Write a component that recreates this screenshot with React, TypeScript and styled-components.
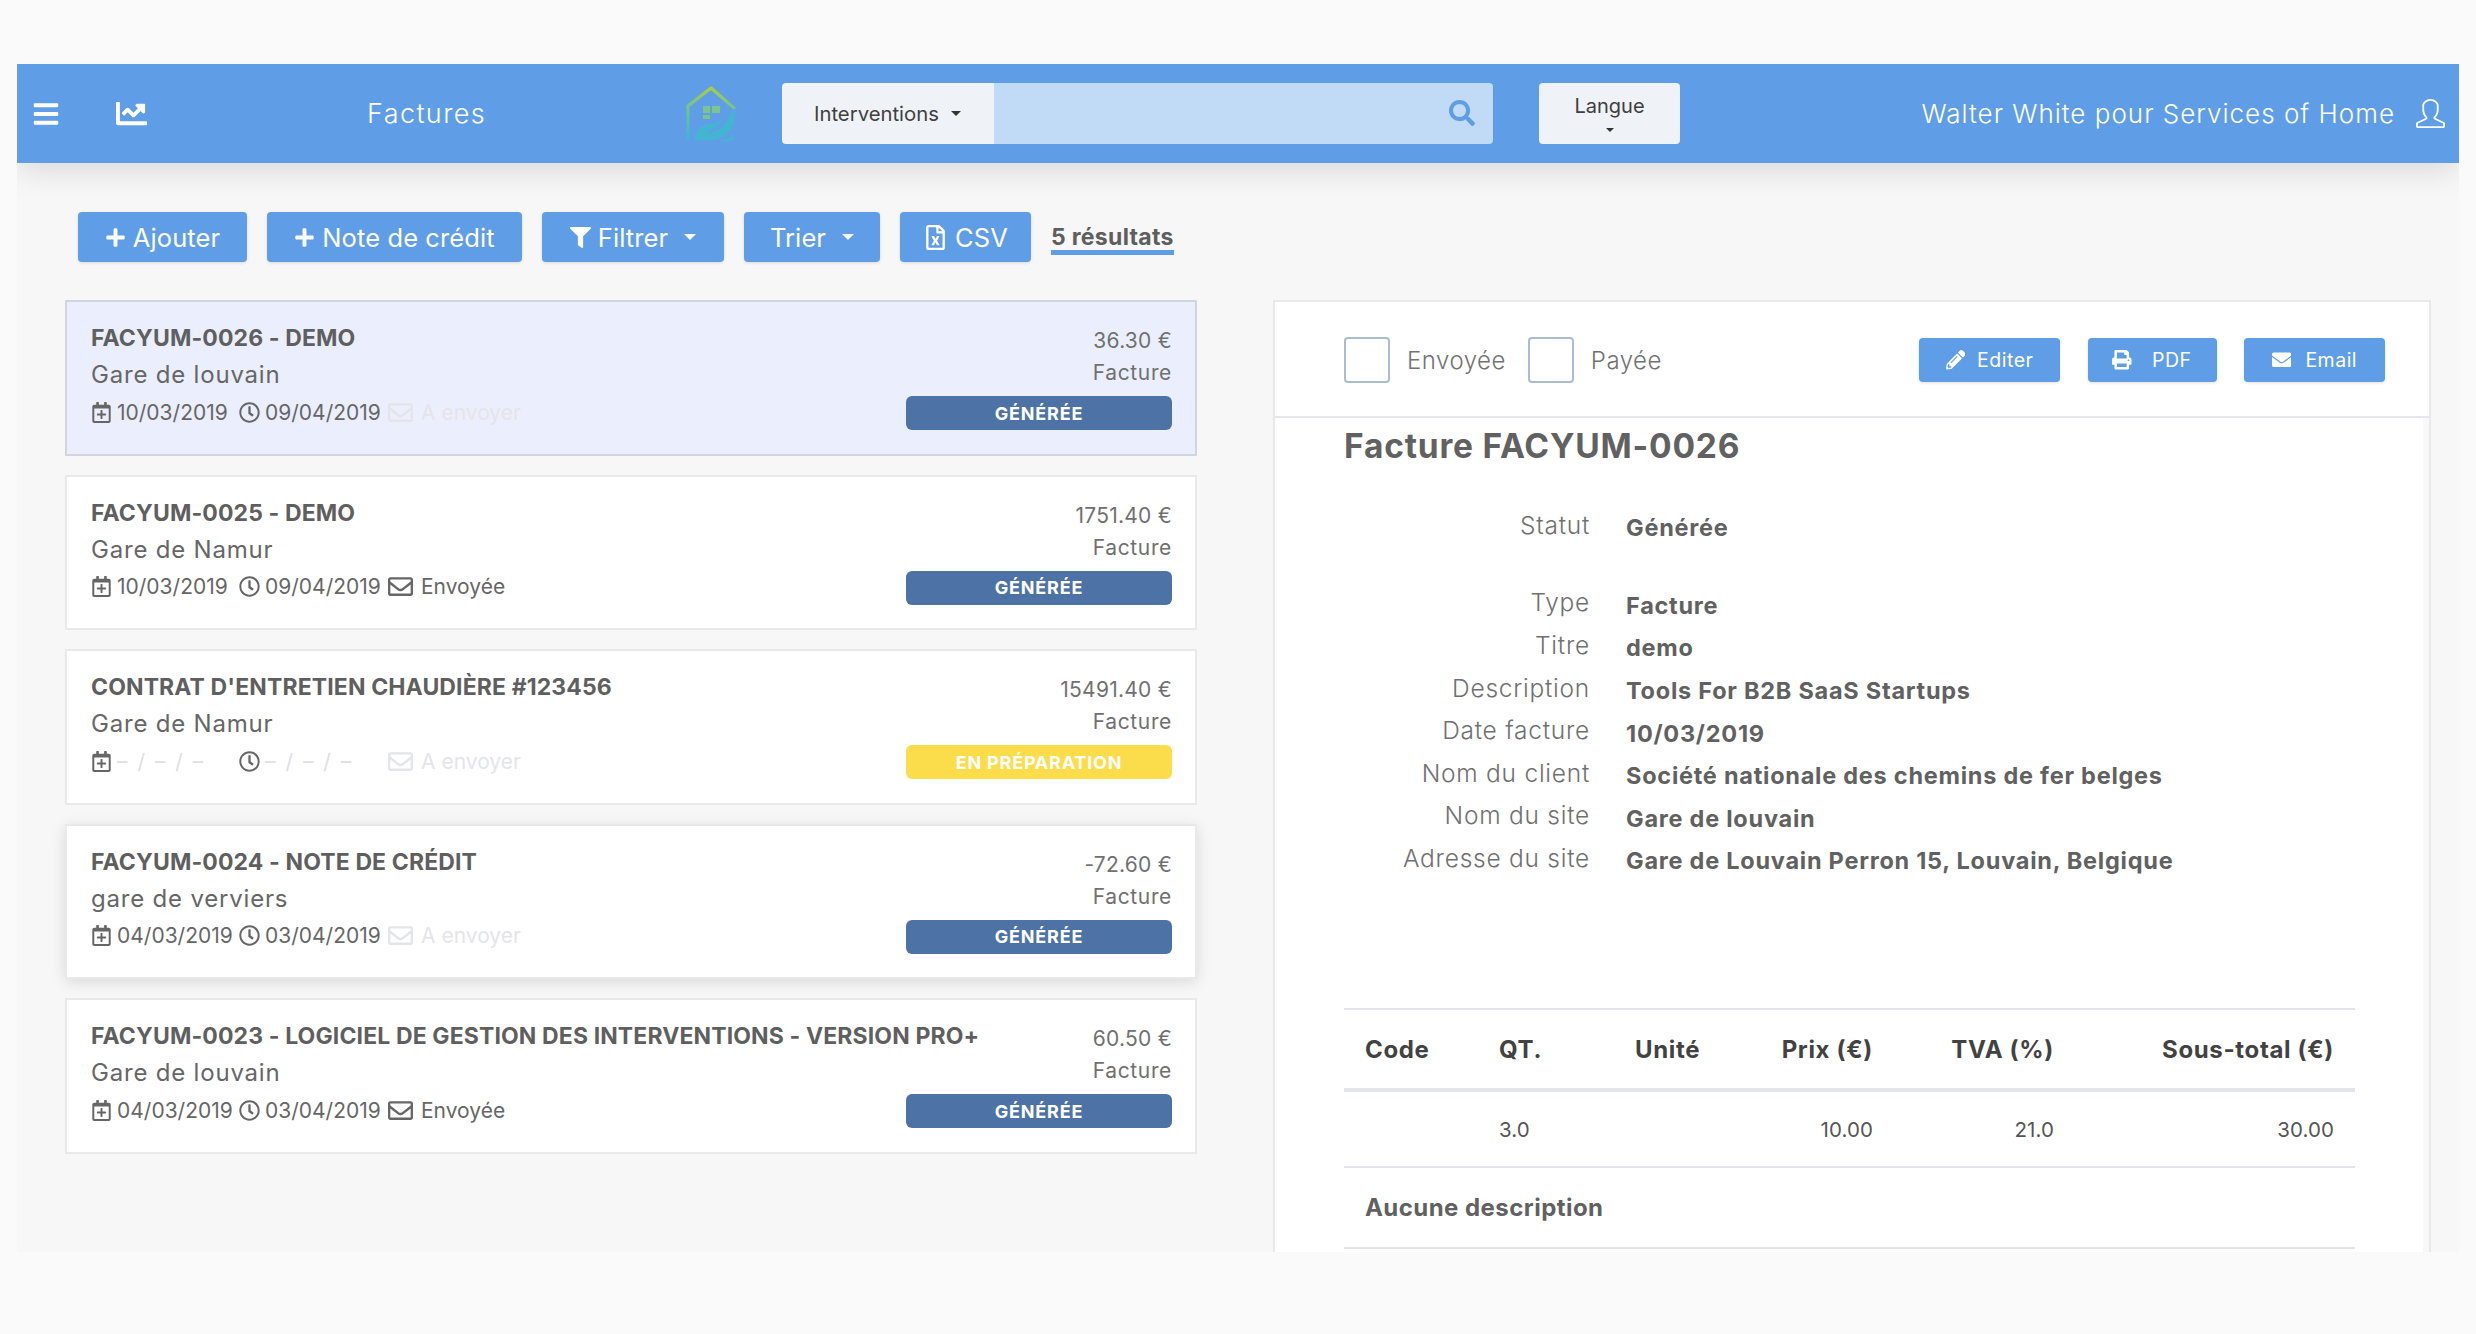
import React from 'react';
import styled, { createGlobalStyle } from 'styled-components';
import {
  FaBars, FaChartLine, FaSearch, FaPlus, FaFilter, FaRegFileExcel, FaRegCalendarPlus,
  FaRegClock, FaRegEnvelope, FaPencilAlt, FaPrint, FaEnvelope,
} from 'react-icons/fa';
import { SlUser } from 'react-icons/sl';

const Global = createGlobalStyle`
  html, body { margin: 0; padding: 0; background: #fafafa; }
  * { box-sizing: border-box; }
  body { font-family: Inter, "Open Sans", "Liberation Sans", sans-serif; color: #636363; }
`;

const Page = styled.div`
  width: 2476px;
  height: 1334px;
  padding: 64px 17px 82px;
`;
const AppFrame = styled.div`
  width: 2442px;
  height: 1188px;
  background: #f7f7f7;
  overflow: hidden;
  position: relative;
`;
const Header = styled.header`
  height: 99px;
  padding-left: 15px;
  background: #5f9ee6;
  display: flex;
  align-items: center;
  color: #fff;
  box-shadow: 0 6px 30px rgba(0, 0, 0, 0.13);
  position: relative;
`;
const HeaderIcon = styled.span<{ $w: number; $mr: number }>`
  display: flex;
  width: ${(p) => p.$w}px;
  margin-right: ${(p) => p.$mr}px;
  font-size: ${(p) => p.$w}px;
`;
const HeaderTitle = styled.div`
  font-size: 27px;
  width: 319px;
  letter-spacing: 1.4px;
  font-weight: 300;
`;
const Logo = styled.svg`
  width: 52px;
  height: 56px;
  margin-right: 44px;
  flex: none;
`;
const SearchBox = styled.div`
  width: 711px;
  height: 61px;
  display: flex;
  border-radius: 4px;
  overflow: hidden;
  margin-top: -1px;
`;
const SearchSelect = styled.div`
  width: 212px;
  background: #eff2f7;
  color: #3f3f3f;
  font-size: 20.3px;
  display: flex;
  align-items: center;
  padding-left: 32px;
  gap: 12px;
`;
const Caret = styled.span<{ $c?: string; $s?: number }>`
  display: inline-block;
  width: 0;
  height: 0;
  border-left: ${(p) => p.$s ?? 5}px solid transparent;
  border-right: ${(p) => p.$s ?? 5}px solid transparent;
  border-top: ${(p) => p.$s ?? 5}px solid ${(p) => p.$c ?? '#333'};
`;
const SearchField = styled.div`
  flex: 1;
  background: #c1daf6;
  display: flex;
  align-items: center;
  justify-content: flex-end;
  padding-right: 18px;
  color: #5f9ee6;
  font-size: 26px;
`;
const LangButton = styled.div`
  width: 141px;
  height: 61px;
  margin-left: 46px;
  background: #eff2f7;
  border-radius: 4px;
  color: #3f3f3f;
  font-size: 20px;
  display: flex;
  flex-direction: column;
  align-items: center;
  padding-top: 11px;
  gap: 10px;
`;
const UserArea = styled.div`
  margin-left: auto;
  padding-right: 14px;
  display: flex;
  align-items: center;
  gap: 21px;
  font-size: 26px;
  font-weight: 300;
  letter-spacing: 1px;
`;
const UserIcon = styled.span`
  display: flex;
  font-size: 29px;
`;
const Toolbar = styled.div`
  display: flex;
  align-items: center;
  padding: 49px 0 0 61px;
  height: 99px;
`;
const Btn = styled.div<{ $w: number; $mr?: number }>`
  width: ${(p) => p.$w}px;
  height: 50px;
  margin-right: ${(p) => p.$mr ?? 20}px;
  background: #5f9ee6;
  border-radius: 4px;
  color: #fff;
  font-size: 25.5px;
  letter-spacing: 0.1px;
  display: flex;
  align-items: center;
  justify-content: center;
  gap: 7px;
  box-shadow: 0 1px 3px rgba(0, 0, 0, 0.12);
  svg { font-size: 21px; }
`;
const CsvIcon = styled.span`
  display: flex;
  svg { font-size: 25px; }
`;
const ToolCaret = styled.span`
  margin-left: 9px;
  display: flex;
`;
const Results = styled.div`
  font-size: 23px;
  line-height: 26px;
  letter-spacing: 0.3px;
  font-weight: 700;
  color: #5e5e5e;
  border-bottom: 5px solid #5f9ee6;
  margin-top: 5px;
`;
const Main = styled.div`
  display: flex;
  align-items: flex-start;
  padding: 38px 0 0 48px;
`;
const List = styled.div`
  width: 1132px;
  display: flex;
  flex-direction: column;
  gap: 19px;
  flex: none;
`;
const Card = styled.div<{ $selected?: boolean; $raised?: boolean }>`
  height: 155.5px;
  background: ${(p) => (p.$selected ? '#ebeffd' : '#fff')};
  border: 2px solid ${(p) => (p.$selected ? '#d2d5df' : '#e9e9e9')};
  padding: 19px 23px 0 24px;
  display: flex;
  justify-content: space-between;
  box-shadow: ${(p) => (p.$raised ? '0 3px 14px rgba(0,0,0,0.12)' : 'none')};
`;
const CardLeft = styled.div`
  display: flex;
  flex-direction: column;
  min-width: 0;
`;
const CardTitle = styled.div`
  font-size: 23px;
  line-height: 32px;
  font-weight: 700;
  color: #5f5f5f;
  letter-spacing: 0.12px;
  white-space: nowrap;
  padding-top: 1px;
`;
const CardSite = styled.div`
  font-size: 24px;
  line-height: 34px;
  margin-top: 4px;
  color: #666;
  letter-spacing: 0.8px;
`;
const Meta = styled.div`
  display: flex;
  align-items: center;
  margin-top: 3px;
  height: 34px;
  font-size: 21px;
`;
const MetaItem = styled.div<{ $w: number; $faded?: boolean }>`
  width: ${(p) => p.$w}px;
  display: flex;
  align-items: center;
  gap: 5px;
  flex: none;
  color: ${(p) => (p.$faded ? '#e4e5e8' : '#666')};
  white-space: nowrap;
  svg { font-size: 21px; flex: none; }
`;
const MetaMail = styled(MetaItem)`
  gap: 8px;
  svg { font-size: 25px; }
`;
const FadedDate = styled.span`
  color: #e0e0e0;
  letter-spacing: 2px;
`;
const CardRight = styled.div`
  width: 266px;
  flex: none;
  display: flex;
  flex-direction: column;
  align-items: flex-end;
  color: #707070;
  font-size: 21px;
`;
const Amount = styled.div`
  line-height: 32px;
  margin-top: 4px;
  letter-spacing: 0.25px;
`;
const Kind = styled.div`
  line-height: 32px;
  letter-spacing: 0.65px;
`;
const Badge = styled.div<{ $yellow?: boolean }>`
  width: 266px;
  height: 34px;
  margin-top: 7px;
  border-radius: 6px;
  background: ${(p) => (p.$yellow ? '#fbdc4a' : '#4d72a6')};
  color: #fff;
  font-size: 18px;
  font-weight: 700;
  letter-spacing: 0.8px;
  display: flex;
  align-items: center;
  justify-content: center;
`;
const Panel = styled.section`
  width: 1158px;
  margin-left: 76px;
  height: 970px;
  background: #fff;
  border: 2px solid #e9e9e9;
  flex: none;
`;
const PanelTop = styled.div`
  height: 116px;
  border-bottom: 2px solid #e6e7eb;
  display: flex;
  align-items: center;
  padding: 2px 44px 0 69px;
`;
const Check = styled.div`
  width: 46px;
  height: 46px;
  border: 2px solid #a9bcd4;
  border-radius: 4px;
  margin-right: 17px;
  flex: none;
`;
const CheckLabel = styled.div<{ $mr: number }>`
  font-size: 24px;
  font-weight: 300;
  margin-right: ${(p) => p.$mr}px;
  color: #727272;
  letter-spacing: 0.5px;
`;
const Actions = styled.div`
  margin-left: auto;
  display: flex;
  gap: 27.5px;
`;
const ActionBtn = styled.div<{ $w: number; $gap: number }>`
  width: ${(p) => p.$w}px;
  height: 44px;
  background: #5f9ee6;
  border-radius: 4px;
  color: #fff;
  font-size: 19.5px;
  display: flex;
  align-items: center;
  justify-content: center;
  gap: ${(p) => p.$gap}px;
  box-shadow: 0 1px 3px rgba(0, 0, 0, 0.12);
  letter-spacing: 0.5px;
`;
const PanelBody = styled.div`
  padding: 5.5px 46px 0 69px;
  border-right: 6px solid #f8f8f8;
  height: 850px;
`;
const DocTitle = styled.h1`
  margin: 0;
  font-size: 33.5px;
  line-height: 44px;
  font-weight: 700;
  color: #616161;
  letter-spacing: 0.8px;
`;
const Fields = styled.div`
  display: grid;
  grid-template-columns: 246px 1fr;
  column-gap: 36px;
  margin-top: 39px;
  align-items: center;
  grid-auto-rows: 42.6px;
`;
const FieldLabel = styled.div`
  text-align: right;
  font-size: 24.5px;
  font-weight: 300;
  color: #707070;
  letter-spacing: 0.75px;
  margin-top: -6px;
`;
const FieldValue = styled.div`
  font-size: 23.5px;
  font-weight: 700;
  color: #616161;
  letter-spacing: 0.75px;
`;
const FieldsRest = styled(Fields)`
  margin-top: 35px;
`;
const Table = styled.div`
  margin-top: 126px;
  width: 1011px;
  border-top: 2px solid #e3e4e9;
`;
const TableRow = styled.div<{ $h: number; $line: number }>`
  display: grid;
  grid-template-columns: 134px 136px 140px 140px 181px 280px;
  height: ${(p) => p.$h}px;
  align-items: center;
  border-bottom: ${(p) => p.$line}px solid #e3e4e9;
`;
const Cell = styled.div<{ $right?: boolean; $head?: boolean }>`
  padding: 0 21px;
  font-size: ${(p) => (p.$head ? 24 : 20.5)}px;
  letter-spacing: ${(p) => (p.$head ? 0.65 : 0.1)}px;
  font-weight: ${(p) => (p.$head ? 700 : 400)};
  text-align: ${(p) => (p.$right ? 'right' : 'left')};
  color: ${(p) => (p.$head ? '#424242' : '#555')};
  white-space: nowrap;
`;
const NoteRow = styled.div`
  height: 81px;
  display: flex;
  align-items: center;
  padding-left: 21px;
  font-size: 24px;
  letter-spacing: 0.45px;
  font-weight: 700;
  color: #616161;
  border-bottom: 2px solid #e3e4e9;
`;

type Inv = {
  title: string; site: string; date: string; due: string; sent: boolean; amount: string;
  yellow?: boolean; selected?: boolean; raised?: boolean;
};
const invoices: Inv[] = [
  { title: 'FACYUM-0026 - DEMO', site: 'Gare de louvain', date: '10/03/2019', due: '09/04/2019', sent: false, amount: '36.30 €', selected: true },
  { title: 'FACYUM-0025 - DEMO', site: 'Gare de Namur', date: '10/03/2019', due: '09/04/2019', sent: true, amount: '1751.40 €' },
  { title: "CONTRAT D'ENTRETIEN CHAUDIÈRE #123456", site: 'Gare de Namur', date: '', due: '', sent: false, amount: '15491.40 €', yellow: true },
  { title: 'FACYUM-0024 - NOTE DE CRÉDIT', site: 'gare de verviers', date: '04/03/2019', due: '03/04/2019', sent: false, amount: '-72.60 €', raised: true },
  { title: 'FACYUM-0023 - LOGICIEL DE GESTION DES INTERVENTIONS - VERSION PRO+', site: 'Gare de louvain', date: '04/03/2019', due: '03/04/2019', sent: true, amount: '60.50 €' },
];

const LogoMark = () => (
  <Logo viewBox="0 0 52 56">
    <defs>
      <linearGradient id="lg" x1="0" y1="0" x2="0" y2="1">
        <stop offset="0" stopColor="#a6cf45" />
        <stop offset="0.5" stopColor="#68c09c" />
        <stop offset="1" stopColor="#3fb4dc" />
      </linearGradient>
    </defs>
    <path d="M2 52V20L25 2l23 20" fill="none" stroke="url(#lg)" strokeWidth="3.2" strokeLinejoin="round" strokeLinecap="round" />
    <path d="M17 20h7v7h-7zM26 20h8v7h-8zM17 29h7v4h-7z" fill="#7cc48b" />
    <path d="M8 54c1-10 8-15 16-16 4-1 9-2 13-6-2 6-6 9-11 11l-6 4c9 0 20-5 26-23l3 4c0 14-9 24-21 26z" fill="#43b5d3" />
    <path d="M30 55c7 0 13-2 17-7l1 5c-3 2-9 3-18 2z" fill="#43b5d3" />
  </Logo>
);

const InvoiceCard = ({ inv }: { inv: Inv }) => (
  <Card $selected={inv.selected} $raised={inv.raised}>
    <CardLeft>
      <CardTitle>{inv.title}</CardTitle>
      <CardSite>{inv.site}</CardSite>
      <Meta>
        <MetaItem $w={148}>
          <FaRegCalendarPlus />
          {inv.date || <FadedDate>– / – / –</FadedDate>}
        </MetaItem>
        <MetaItem $w={149}>
          <FaRegClock />
          {inv.due || <FadedDate>– / – / –</FadedDate>}
        </MetaItem>
        <MetaMail $w={170} $faded={!inv.sent}>
          <FaRegEnvelope />
          {inv.sent ? 'Envoyée' : 'A envoyer'}
        </MetaMail>
      </Meta>
    </CardLeft>
    <CardRight>
      <Amount>{inv.amount}</Amount>
      <Kind>Facture</Kind>
      <Badge $yellow={inv.yellow}>{inv.yellow ? 'EN PRÉPARATION' : 'GÉNÉRÉE'}</Badge>
    </CardRight>
  </Card>
);

export default function App() {
  return (
    <Page>
      <Global />
      <AppFrame>
        <Header>
          <HeaderIcon $w={28} $mr={56}><FaBars /></HeaderIcon>
          <HeaderIcon $w={31} $mr={220}><FaChartLine /></HeaderIcon>
          <HeaderTitle>Factures</HeaderTitle>
          <LogoMark />
          <SearchBox>
            <SearchSelect>Interventions <Caret /></SearchSelect>
            <SearchField><FaSearch /></SearchField>
          </SearchBox>
          <LangButton>Langue <Caret $s={4} /></LangButton>
          <UserArea>
            Walter White pour Services of Home
            <UserIcon><SlUser /></UserIcon>
          </UserArea>
        </Header>
        <Toolbar>
          <Btn $w={169}><FaPlus />Ajouter</Btn>
          <Btn $w={255}><FaPlus />Note de crédit</Btn>
          <Btn $w={182}><FaFilter />Filtrer<ToolCaret><Caret $c="#fff" $s={6} /></ToolCaret></Btn>
          <Btn $w={136}>Trier<ToolCaret><Caret $c="#fff" $s={6} /></ToolCaret></Btn>
          <Btn $w={131}><CsvIcon><FaRegFileExcel /></CsvIcon>CSV</Btn>
          <Results>5 résultats</Results>
        </Toolbar>
        <Main>
          <List>
            {invoices.map((inv) => <InvoiceCard key={inv.title} inv={inv} />)}
          </List>
          <Panel>
            <PanelTop>
              <Check />
              <CheckLabel $mr={22}>Envoyée</CheckLabel>
              <Check />
              <CheckLabel $mr={0}>Payée</CheckLabel>
              <Actions>
                <ActionBtn $w={141} $gap={12}><FaPencilAlt />Editer</ActionBtn>
                <ActionBtn $w={129} $gap={20}><FaPrint />PDF</ActionBtn>
                <ActionBtn $w={141} $gap={14}><FaEnvelope />Email</ActionBtn>
              </Actions>
            </PanelTop>
            <PanelBody>
              <DocTitle>Facture FACYUM-0026</DocTitle>
              <Fields>
                <FieldLabel>Statut</FieldLabel><FieldValue>Générée</FieldValue>
              </Fields>
              <FieldsRest>
                <FieldLabel>Type</FieldLabel><FieldValue>Facture</FieldValue>
                <FieldLabel>Titre</FieldLabel><FieldValue>demo</FieldValue>
                <FieldLabel>Description</FieldLabel><FieldValue>Tools For B2B SaaS Startups</FieldValue>
                <FieldLabel>Date facture</FieldLabel><FieldValue>10/03/2019</FieldValue>
                <FieldLabel>Nom du client</FieldLabel><FieldValue>Société nationale des chemins de fer belges</FieldValue>
                <FieldLabel>Nom du site</FieldLabel><FieldValue>Gare de louvain</FieldValue>
                <FieldLabel>Adresse du site</FieldLabel><FieldValue>Gare de Louvain Perron 15, Louvain, Belgique</FieldValue>
              </FieldsRest>
              <Table>
                <TableRow $h={82} $line={4}>
                  <Cell $head>Code</Cell>
                  <Cell $head>QT.</Cell>
                  <Cell $head>Unité</Cell>
                  <Cell $head $right>Prix (€)</Cell>
                  <Cell $head $right>TVA (%)</Cell>
                  <Cell $head $right>Sous-total (€)</Cell>
                </TableRow>
                <TableRow $h={76} $line={2}>
                  <Cell />
                  <Cell>3.0</Cell>
                  <Cell />
                  <Cell $right>10.00</Cell>
                  <Cell $right>21.0</Cell>
                  <Cell $right>30.00</Cell>
                </TableRow>
                <NoteRow>Aucune description</NoteRow>
              </Table>
            </PanelBody>
          </Panel>
        </Main>
      </AppFrame>
    </Page>
  );
}
